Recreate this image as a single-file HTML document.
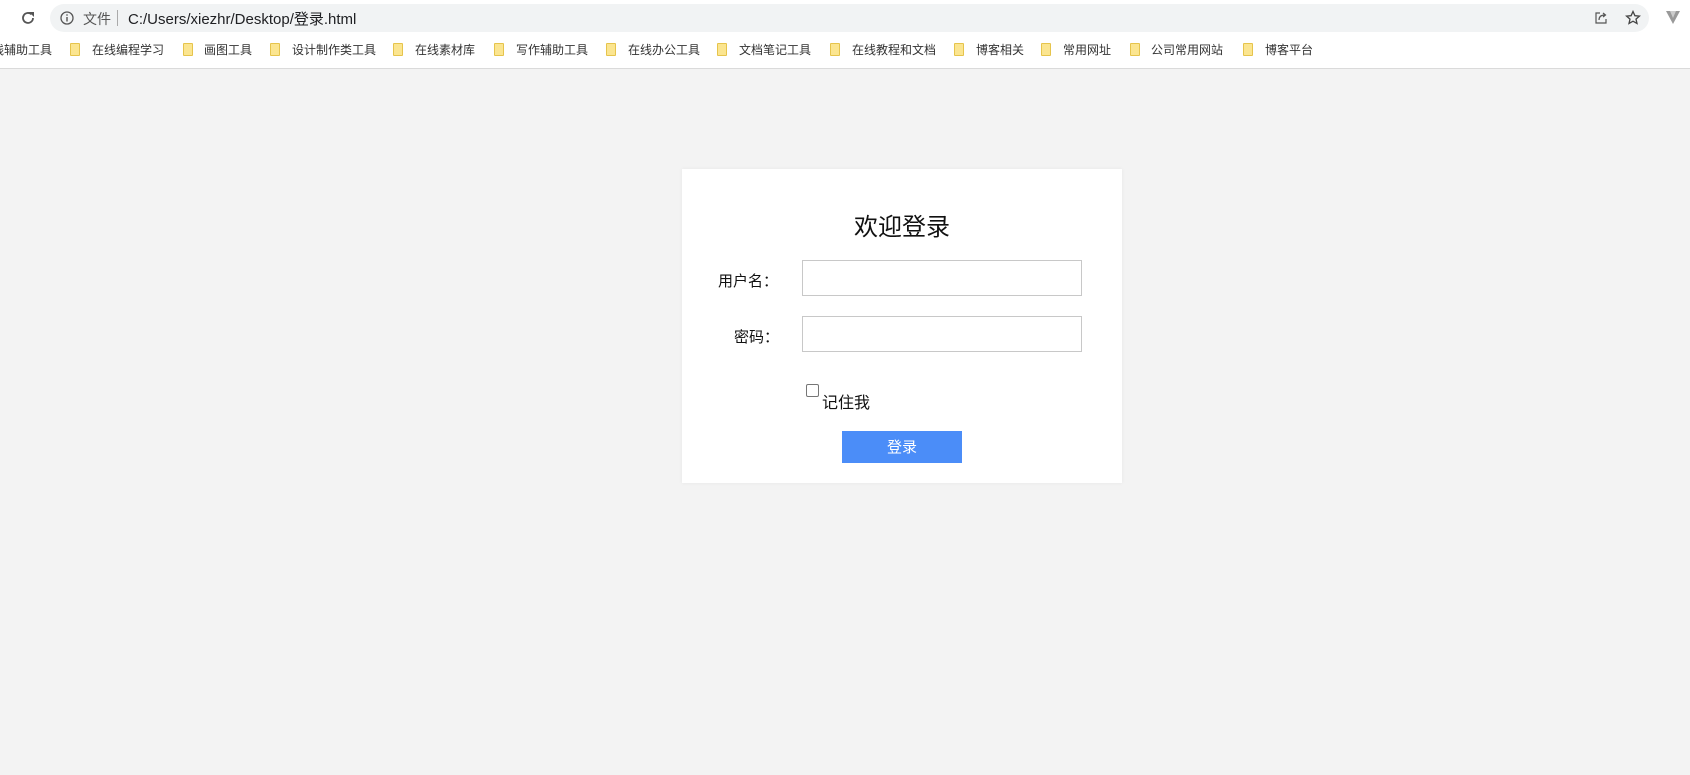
<!DOCTYPE html>
<html><head><meta charset="utf-8"><style>
body{margin:0;width:1690px;height:775px;background:#f3f3f3;font-family:"Liberation Sans","Noto Sans CJK SC",sans-serif;position:relative;overflow:hidden}
.top{position:absolute;left:0;top:0;width:1690px;height:68px;background:#fff;border-bottom:1px solid #dadada}
.addr{position:absolute;left:50px;top:4px;width:1599px;height:28px;border-radius:14px;background:#f1f3f4}
.bm{position:absolute;top:42px;font-size:12px;color:#333;line-height:16px}
.f{position:absolute;top:43px;width:10px;height:13px;background:#fbe590;border:1px solid #e6c44c;border-radius:1px;box-sizing:border-box}
.card{position:absolute;left:682px;top:169px;width:440px;height:314px;background:#fff;box-shadow:0 0 4px rgba(0,0,0,.06)}
.t{position:absolute;left:0;width:440px;text-align:center;top:38px;font-size:24px;color:#111}
.lab{position:absolute;font-size:15px;color:#111}
.in{position:absolute;left:120px;width:280px;height:36px;border:1px solid #c8c8c8;box-sizing:border-box}
.btn{position:absolute;left:160px;top:262px;width:120px;height:32px;background:#4b8df8;color:#fff;font-size:15px;text-align:center;line-height:34px}
</style></head><body>
<div class="top">
<div style="position:absolute;left:-4px;top:12px;color:#888;font-size:12px">›</div>
<svg style="position:absolute;left:20px;top:10px" width="16" height="16" viewBox="0 0 16 16"><path d="M13 8a5 5 0 1 1-1.5-3.6" fill="none" stroke="#555" stroke-width="1.8"/><path d="M9 2h5v5z" fill="#555"/></svg>
<div class="addr">
<svg style="position:absolute;left:10px;top:7px" width="14" height="14" viewBox="0 0 14 14"><circle cx="7" cy="7" r="6" fill="none" stroke="#555" stroke-width="1.3"/><rect x="6.3" y="6" width="1.4" height="4.5" fill="#555"/><rect x="6.3" y="3.3" width="1.4" height="1.4" fill="#555"/></svg>
<span style="position:absolute;left:33px;top:5px;font-size:14px;color:#555">文件</span>
<span style="position:absolute;left:67px;top:6px;width:1px;height:16px;background:#aaa"></span>
<span style="position:absolute;left:78px;top:4px;font-size:15px;color:#202124">C:/Users/xiezhr/Desktop/登录.html</span>
<svg style="position:absolute;left:1544px;top:7px" width="14" height="14" viewBox="0 0 14 14"><path d="M6 2H2v10h10V8" fill="none" stroke="#555" stroke-width="1.2"/><path d="M5 9c0-4 3-5 6-5M9 2l2.5 2L9 6" fill="none" stroke="#555" stroke-width="1.2"/></svg>
<svg style="position:absolute;left:1575px;top:6px" width="16" height="16" viewBox="0 0 16 16"><path d="M8 1.5l1.9 4.2 4.5.4-3.4 3 1 4.4L8 11.2 4 13.5l1-4.4-3.4-3 4.5-.4z" fill="none" stroke="#444" stroke-width="1.3"/></svg>
</div>
<svg style="position:absolute;left:1666px;top:10px" width="14" height="14" viewBox="0 0 14 14"><path d="M0 1h14L7 14z" fill="#999"/><path d="M4 1h6L7 8z" fill="#ccc"/></svg>
<div class="bm" style="left:-8px">线辅助工具</div>
<div class="f" style="left:70px"></div><div class="bm" style="left:92px">在线编程学习</div>
<div class="f" style="left:183px"></div><div class="bm" style="left:204px">画图工具</div>
<div class="f" style="left:270px"></div><div class="bm" style="left:292px">设计制作类工具</div>
<div class="f" style="left:393px"></div><div class="bm" style="left:415px">在线素材库</div>
<div class="f" style="left:494px"></div><div class="bm" style="left:516px">写作辅助工具</div>
<div class="f" style="left:606px"></div><div class="bm" style="left:628px">在线办公工具</div>
<div class="f" style="left:717px"></div><div class="bm" style="left:739px">文档笔记工具</div>
<div class="f" style="left:830px"></div><div class="bm" style="left:852px">在线教程和文档</div>
<div class="f" style="left:954px"></div><div class="bm" style="left:976px">博客相关</div>
<div class="f" style="left:1041px"></div><div class="bm" style="left:1063px">常用网址</div>
<div class="f" style="left:1130px"></div><div class="bm" style="left:1151px">公司常用网站</div>
<div class="f" style="left:1243px"></div><div class="bm" style="left:1265px">博客平台</div>
</div>
<div class="card">
<div class="t">欢迎登录</div>
<div class="lab" style="left:36px;top:101px">用户名：</div>
<div class="in" style="top:91px"></div>
<div class="lab" style="left:52px;top:157px">密码：</div>
<div class="in" style="top:147px"></div>
<div style="position:absolute;left:124px;top:215px;width:13px;height:13px;border:1px solid #767676;border-radius:2px;box-sizing:border-box"></div>
<div class="lab" style="left:140px;top:220px;font-size:16px">记住我</div>
<div class="btn">登录</div>
</div>
</body></html>
